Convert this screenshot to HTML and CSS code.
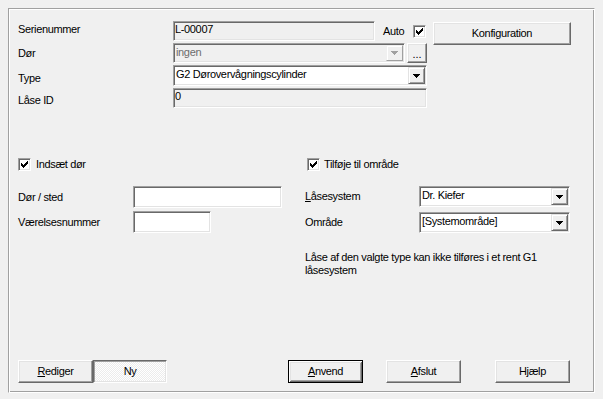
FILE: index.html
```html
<!DOCTYPE html>
<html lang="da">
<head>
<meta charset="utf-8">
<title>Lås</title>
<link rel="stylesheet" href="styles.css">
</head>
<body>
<div class="frame">
  <div class="top">
    <div class="lbl l-serial">Serienummer</div>
    <div class="fld">
      <div class="edit ro serial">L-00007</div>
      <span class="auto">Auto</span>
      <span class="check auto-check"><svg width="7" height="7" viewBox="0 0 7 7"><path d="M0 2h1v3H0zM1 3h1v3H1zM2 4h1v3H2zM3 3h1v3H3zM4 2h1v3H4zM5 1h1v3H5zM6 0h1v3H6z"/></svg></span>
    </div>
    <button class="btn konf">Konfiguration</button>

    <div class="lbl l-door">Dør</div>
    <div class="fld">
      <div class="combo disabled door"><span class="val">ingen</span><span class="arrow"><svg width="7" height="4" viewBox="0 0 7 4"><path d="M0 0h7v1H0zM1 1h5v1H1zM2 2h3v1H2zM3 3h1v1H3z"/></svg></span></div>
      <button class="btn dots">...</button>
    </div>

    <div class="lbl l-type">Type</div>
    <div class="fld">
      <div class="combo type"><span class="val">G2 Dørovervågningscylinder</span><span class="arrow"><svg width="7" height="4" viewBox="0 0 7 4"><path d="M0 0h7v1H0zM1 1h5v1H1zM2 2h3v1H2zM3 3h1v1H3z"/></svg></span></div>
    </div>

    <div class="lbl l-id">Låse ID</div>
    <div class="fld">
      <div class="edit ro lockid">0</div>
    </div>
  </div>

  <div class="mid">
    <div class="col left">
      <div class="cb-row"><span class="check"><svg width="7" height="7" viewBox="0 0 7 7"><path d="M0 2h1v3H0zM1 3h1v3H1zM2 4h1v3H2zM3 3h1v3H3zM4 2h1v3H4zM5 1h1v3H5zM6 0h1v3H6z"/></svg></span><span class="cb-text">Indsæt dør</span></div>
      <div class="frow l1"><span class="flbl">Dør / sted</span><div class="edit place"></div></div>
      <div class="frow l2"><span class="flbl">Værelsesnummer</span><div class="edit room"></div></div>
    </div>
    <div class="col right">
      <div class="cb-row r"><span class="check"><svg width="7" height="7" viewBox="0 0 7 7"><path d="M0 2h1v3H0zM1 3h1v3H1zM2 4h1v3H2zM3 3h1v3H3zM4 2h1v3H4zM5 1h1v3H5zM6 0h1v3H6z"/></svg></span><span class="cb-text">Tilføje til område</span></div>
      <div class="frow r1"><span class="flbl rl"><u>L</u>åsesystem</span><div class="combo sel"><span class="val">Dr. Kiefer</span><span class="arrow"><svg width="7" height="4" viewBox="0 0 7 4"><path d="M0 0h7v1H0zM1 1h5v1H1zM2 2h3v1H2zM3 3h1v1H3z"/></svg></span></div></div>
      <div class="frow r2"><span class="flbl rl">Område</span><div class="combo sel"><span class="val">[Systemområde]</span><span class="arrow"><svg width="7" height="4" viewBox="0 0 7 4"><path d="M0 0h7v1H0zM1 1h5v1H1zM2 2h3v1H2zM3 3h1v1H3z"/></svg></span></div></div>
      <p class="note">Låse af den valgte type kan ikke tilføres i et rent G1 låsesystem</p>
    </div>
  </div>

  <div class="buttons">
    <button class="btn"><u>R</u>ediger</button>
    <button class="btn pressed">Ny</button>
    <button class="btn default apply"><u>A</u>nvend</button>
    <button class="btn quit"><u>A</u>fslut</button>
    <button class="btn help">Hjælp</button>
  </div>
</div>
</body>
</html>
```

FILE: styles.css
```css
* { box-sizing: border-box; }
html, body { margin: 0; padding: 0; }
body {
  background: #f0f0f0;
  font-family: "Liberation Sans", Arial, sans-serif;
  font-size: 11px;
  line-height: 13px;
  letter-spacing: -0.35px;
  color: #000;
  width: 603px;
  height: 399px;
  overflow: hidden;
}
u { text-decoration: underline; text-underline-offset: 1px; }

.frame {
  margin: 8px 0 0 8px;
  width: 587px;
  height: 385px;
  border: 1px solid;
  border-color: #a0a0a0 #fff #fff #a0a0a0;
  box-shadow: inset 1px 1px #fff, inset -1px -1px #a0a0a0;
  padding: 12px 0 9px 9px;
  display: flex;
  flex-direction: column;
}

/* buttons */
.btn {
  font: inherit;
  letter-spacing: inherit;
  color: #000;
  background: #f0f0f0;
  border: 1px solid;
  border-color: #fff #696969 #696969 #fff;
  box-shadow: inset -1px -1px #a0a0a0, inset 1px 1px #e3e3e3;
  padding: 0;
  height: 23px;
  width: 75px;
  text-align: center;
}

/* top block */
.top {
  display: grid;
  grid-template-columns: 155px 254px 144px;
  grid-template-rows: 20px 20px 21px 20px;
  row-gap: 2px;
}
.lbl { grid-column: 1; }
.l-serial { padding-top: 2px; }
.l-door { padding-top: 4px; }
.l-type { padding-top: 7px; }
.l-id { padding-top: 6px; }
.fld { grid-column: 2; display: flex; align-items: center; }
.btn.konf {
  grid-column: 3;
  grid-row: 1 / span 2;
  align-self: start;
  justify-self: end;
  width: 138px;
  margin-top: 1px;
}

/* sunken edit */
.edit {
  height: 20px;
  border: 1px solid;
  border-color: #a0a0a0 #fff #fff #a0a0a0;
  box-shadow: inset 1px 1px #696969, inset -1px -1px #e3e3e3;
  background: #fff;
  padding: 1px 2px 0 1px;
  white-space: nowrap;
  overflow: hidden;
}
.ro { background: #f0f0f0; }
.serial { width: 202px; }
.lockid { width: 254px; }
.place { width: 149px; height: 22px; }
.room { width: 78px; height: 22px; }

.auto { margin-left: 8px; padding-top: 1px; }
.auto-check { margin-left: 9px; margin-top: 1px; }

/* checkbox */
.check {
  width: 13px;
  height: 13px;
  flex: none;
  border: 1px solid;
  border-color: #a0a0a0 #fff #fff #a0a0a0;
  box-shadow: inset 1px 1px #696969, inset -1px -1px #e3e3e3;
  background: #fff;
  display: inline-flex;
  align-items: center;
  justify-content: center;
}
.check svg { display: block; fill: #000; }

/* combobox */
.combo {
  display: flex;
  height: 21px;
  border: 1px solid;
  border-color: #a0a0a0 #fff #fff #a0a0a0;
  box-shadow: inset 1px 1px #696969, inset -1px -1px #e3e3e3;
  background: #fff;
  padding: 1px;
}
.combo .val { flex: 1; padding: 1px 0 0 1px; white-space: nowrap; overflow: hidden; }
.combo .arrow {
  width: 17px;
  flex: none;
  border: 1px solid;
  border-color: #e3e3e3 #696969 #696969 #e3e3e3;
  box-shadow: inset 1px 1px #fff, inset -1px -1px #a0a0a0;
  background: #f0f0f0;
  display: flex;
  align-items: center;
  justify-content: center;
}
.combo .arrow svg { display: block; fill: #000; }
.type { width: 254px; }
.door { width: 232px; height: 20px; }
.disabled { background: #f0f0f0; color: #6d6d6d; }
.disabled .arrow svg { fill: #a0a0a0; }
.disabled .arrow { border-color: #f0f0f0 #a0a0a0 #a0a0a0 #f0f0f0; box-shadow: inset 1px 1px #fff; }

.btn.dots {
  width: 20px;
  height: 20px;
  margin-left: 2px;
  letter-spacing: 0;
  padding-top: 3px;
}
.btn.default {
  border-color: #000;
  box-shadow: inset 1px 1px #fff, inset -1px -1px #696969, inset 2px 2px #e3e3e3, inset -2px -2px #a0a0a0;
}
.btn.pressed {
  width: 74px;
  border-color: #696969 #fff #fff #696969;
  box-shadow: inset 1px 1px #a0a0a0, inset -1px -1px #e3e3e3;
  background-color: #fff;
  background-image: repeating-conic-gradient(#fff 0 25%, #ececec 0 50%);
  background-size: 2px 2px;
}

/* middle */
.mid { display: flex; margin-top: 50px; }
.col.left { width: 287px; }
.col.right { flex: 1; }
.cb-row { display: flex; align-items: center; height: 13px; }
.cb-text { margin-left: 5px; }
.cb-row.r { margin-left: 2px; }
.cb-row.r .cb-text { margin-left: 4px; }
.frow { display: flex; align-items: center; }
.flbl { width: 115px; flex: none; }
.flbl.rl { width: 114px; }
.l1 { margin-top: 15px; }
.l2 { margin-top: 3px; }
.r1 { margin-top: 15px; }
.r2 { margin-top: 5px; }
.sel { width: 151px; }
.note { margin: 18px 0 0; width: 265px; }

/* bottom row */
.buttons { margin-top: auto; display: flex; }
.apply { margin-left: 121px; }
.quit { margin-left: 23px; }
.help { margin-left: 34px; }
```
